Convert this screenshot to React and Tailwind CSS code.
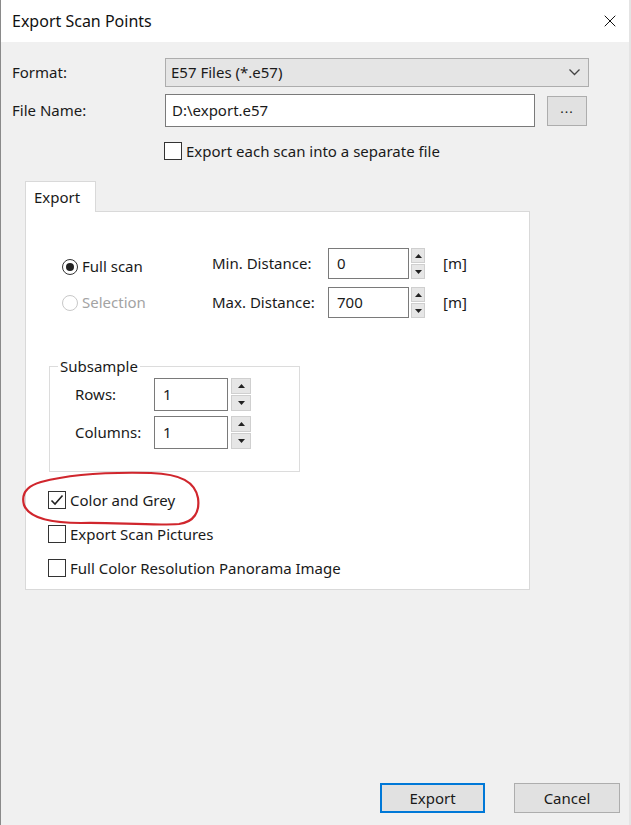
import { X } from 'lucide-react';

const font = { fontFamily: '"Noto Sans", "Open Sans", sans-serif' };

function Spinner({ w = 'w-[14px]', h = 'h-[15px]' }) {
    return (
        <div className="flex flex-col gap-[1px]">
            <div className={`${w} ${h} bg-[#e6e6e6] border border-[#cfcfcf] flex items-center justify-center`}>
                <svg width="7" height="4" viewBox="0 0 7 4"><path d="M0 4 L3.5 0 L7 4 Z" fill="#222" /></svg>
            </div>
            <div className={`${w} ${h} bg-[#e6e6e6] border border-[#cfcfcf] flex items-center justify-center`}>
                <svg width="7" height="4" viewBox="0 0 7 4"><path d="M0 0 L3.5 4 L7 0 Z" fill="#222" /></svg>
            </div>
        </div>
    );
}

function Check({ checked, label }) {
    return (
        <div className="flex items-center h-[20px]">
            <div className="w-[18px] h-[18px] border border-[#333] bg-white flex items-center justify-center">
                {checked && (
                    <svg width="14" height="12" viewBox="0 0 14 12">
                        <path d="M1.5 6.5 L5 10 L12.5 1.5" fill="none" stroke="#222" strokeWidth="1.6" />
                    </svg>
                )}
            </div>
            <span className="ml-[4px]">{label}</span>
        </div>
    );
}

export default function App() {
    return (
        <div style={font} className="relative w-[631px] h-[825px] bg-[#f0f0f0] border-l border-r-2 border-l-[#8a8a8a] border-r-[#e4e4e4] flex flex-col text-[15px] text-[#1a1a1a] overflow-hidden">
            {/* title bar */}
            <div className="h-[42px] bg-white flex items-center justify-between pl-[11px] pr-[9px] shrink-0">
                <span className="text-[16px] text-[#111]">Export Scan Points</span>
                <X size={20} strokeWidth={1.2} color="#111" />
            </div>

            {/* format */}
            <div className="flex items-center mt-[16px]">
                <span className="w-[164px] pl-[11px]">Format:</span>
                <div className="w-[424px] h-[29px] bg-[#e5e5e5] border border-[#adadad] flex items-center justify-between pl-[5px] pr-[8px]">
                    <span>E57 Files (*.e57)</span>
                    <svg width="11" height="7" viewBox="0 0 11 7"><path d="M0.5 0.5 L5.5 5.5 L10.5 0.5" fill="none" stroke="#444" strokeWidth="1.3" /></svg>
                </div>
            </div>

            {/* file name */}
            <div className="flex items-center mt-[7px]">
                <span className="w-[164px] pl-[11px]">File Name:</span>
                <div className="w-[370px] h-[33px] bg-white border border-[#7a7a7a] flex items-center pl-[6px]">
                    D:\export.e57
                </div>
                <div className="ml-[12px] w-[40px] h-[30px] bg-[#e1e1e1] border border-[#adadad] flex items-center justify-center text-[13px] tracking-[1px] pb-[3px]">
                    ...
                </div>
            </div>

            {/* separate file */}
            <div className="ml-[163px] mt-[14px]">
                <Check label="Export each scan into a separate file" />
            </div>

            {/* tab */}
            <div className="ml-[24px] mt-[20px] w-[71px] h-[31px] bg-white border border-b-0 border-[#d9d9d9] flex items-center pl-[8px] relative z-10">
                Export
            </div>
            <div className="ml-[24px] w-[505px] h-[379px] -mt-[1px] bg-white border border-[#d9d9d9] flex flex-col">
                {/* distance rows */}
                <div className="flex flex-col gap-[8px] pl-[36px] pt-[36px]">
                    <div className="flex items-center h-[31px]">
                        <div className="w-[150px] flex items-center pt-[6px]">
                            <div className="w-[16px] h-[16px] rounded-full border border-[#333] flex items-center justify-center">
                                <div className="w-[8px] h-[8px] rounded-full bg-[#222]" />
                            </div>
                            <span className="ml-[4px]">Full scan</span>
                        </div>
                        <span className="w-[116px]">Min. Distance:</span>
                        <div className="w-[81px] h-[31px] border border-[#7a7a7a] flex items-center pl-[8px]">0</div>
                        <div className="ml-[2px]"><Spinner /></div>
                        <span className="ml-[18px]">[m]</span>
                    </div>
                    <div className="flex items-center h-[31px]">
                        <div className="w-[150px] flex items-center text-[#a3a3a3]">
                            <div className="w-[16px] h-[16px] rounded-full border border-[#c8c8c8]" />
                            <span className="ml-[4px]">Selection</span>
                        </div>
                        <span className="w-[116px]">Max. Distance:</span>
                        <div className="w-[81px] h-[31px] border border-[#7a7a7a] flex items-center pl-[8px]">700</div>
                        <div className="ml-[2px]"><Spinner /></div>
                        <span className="ml-[18px]">[m]</span>
                    </div>
                </div>

                {/* subsample group */}
                <fieldset className="ml-[23px] mt-[37px] w-[251px] h-[117px] border border-[#dcdcdc]">
                    <legend className="ml-[8px] px-[2px]">Subsample</legend>
                    <div className="flex flex-col gap-[5px] pl-[25px]">
                        <div className="flex items-center">
                            <span className="w-[79px]">Rows:</span>
                            <div className="w-[74px] h-[33px] border border-[#7a7a7a] flex items-center pl-[8px]">1</div>
                            <div className="ml-[3px]"><Spinner w="w-[20px]" h="h-[16px]" /></div>
                        </div>
                        <div className="flex items-center">
                            <span className="w-[79px]">Columns:</span>
                            <div className="w-[74px] h-[33px] border border-[#7a7a7a] flex items-center pl-[8px]">1</div>
                            <div className="ml-[3px]"><Spinner w="w-[20px]" h="h-[16px]" /></div>
                        </div>
                    </div>
                </fieldset>

                {/* options */}
                <div className="ml-[22px] mt-[18px] flex flex-col gap-[14px]">
                    <Check checked label="Color and Grey" />
                    <Check label="Export Scan Pictures" />
                    <Check label="Full Color Resolution Panorama Image" />
                </div>
            </div>

            {/* buttons */}
            <div className="mt-auto mb-[12px] flex justify-end gap-[29px] pr-[9px]">
                <div className="w-[105px] h-[30px] bg-[#e1e1e1] border-2 border-[#0078d7] flex items-center justify-center">Export</div>
                <div className="w-[106px] h-[30px] bg-[#e1e1e1] border border-[#adadad] flex items-center justify-center">Cancel</div>
            </div>

            {/* red hand-drawn annotation */}
            <svg className="absolute left-0 top-0 pointer-events-none" width="631" height="825" viewBox="0 0 631 825">
                <path
                    d="M40 482 C70 474 110 472 150 473 C180 474 194 482 197 498 C199 512 193 522 178 524 C150 526 110 522 80 523 C50 523 28 518 23 505 C20 494 26 486 40 482"
                    fill="none" stroke="#d0262d" strokeWidth="2.2" strokeLinecap="round"
                />
            </svg>
        </div>
    );
}
